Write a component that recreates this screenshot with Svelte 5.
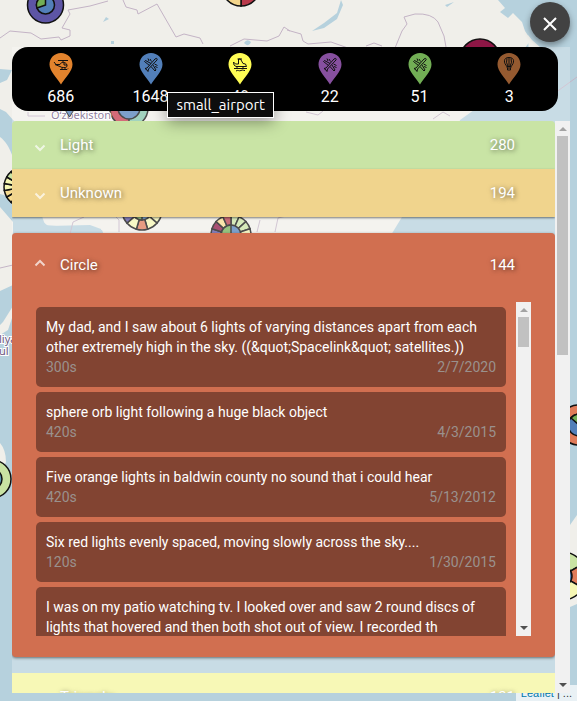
<script>
  let closed = $state(false);

  const airports = [
    { name: 'heliport', count: 686, color: '#e2832d', icon: 'heli' },
    { name: 'large_airport', count: 1648, color: '#527fb9', icon: 'plane' },
    { name: 'small_airport', count: 49, color: '#fffd54', icon: 'sea' },
    { name: 'medium_airport', count: 22, color: '#87509f', icon: 'plane' },
    { name: 'closed', count: 51, color: '#72ae55', icon: 'plane' },
    { name: 'balloonport', count: 3, color: '#955a30', icon: 'balloon' }
  ];

  const reports = [
    { text: 'My dad, and I saw about 6 lights of varying distances apart from each other extremely high in the sky. ((&quot;Spacelink&quot; satellites.))', time: '300s', date: '2/7/2020' },
    { text: 'sphere orb light following a huge black object', time: '420s', date: '4/3/2015' },
    { text: 'Five orange lights in baldwin county no sound that i could hear', time: '420s', date: '5/13/2012' },
    { text: 'Six red lights evenly spaced, moving slowly across the sky....', time: '120s', date: '1/30/2015' },
    { text: 'I was on my patio watching tv. I looked over and saw 2 round discs of lights that hovered and then both shot out of view. I recorded th', time: '180s', date: '8/12/2014' }
  ];

  function wedge(i, n, r) {
    const a = (i / n) * Math.PI * 2 - Math.PI / 2;
    const b = ((i + 1) / n) * Math.PI * 2 - Math.PI / 2;
    return `M0 0L${Math.cos(a) * r} ${Math.sin(a) * r}A${r} ${r} 0 0 1 ${Math.cos(b) * r} ${Math.sin(b) * r}Z`;
  }

  const wheels = [
    { x: 241, y: -13, r: 19, colors: ['#b93a4b', '#b93a4b', '#f2d48b', '#f2d48b'], core: '#5180b9' },
    { x: 142, y: 210, r: 20, colors: ['#f6f7b3', '#83c5aa', '#c9e3a3', '#f6f7b3', '#f6f7b3', '#df7b59', '#f6f7b3', '#5d55a5', '#f7dc91', '#cf4e54', '#c9e3a3'], core: '#5180b9' },
    { x: 231, y: 235, r: 20, colors: ['#c9e3a3', '#c9e3a3', '#c9e3a3', '#f6f7b3', '#f6f7b3', '#f7dc91', '#df7b59', '#df7b59', '#f6f7b3', '#f6f7b3', '#f6f7b3', '#5d55a5', '#8d1645', '#f7dc91', '#b93a4b'], core: '#5180b9' },
    { x: 24, y: 187, r: 20, colors: ['#c9e3a3', '#f6f7b3', '#f6f7b3', '#f7dc91', '#e5946b', '#e5946b', '#cf4e54', '#cf4e54', '#8d1645', '#8d1645', '#c53a4b', '#f7dc91', '#f7dc91', '#f6f7b3', '#f6f7b3', '#c9e3a3', '#5d55a5', '#5d55a5'], core: '#72ae55' },
    { x: 562, y: 576, r: 24, colors: ['#c9e3a3', '#df7b59', '#f6f7b3', '#f6f7b3', '#cf4e54', '#f7dc91'], core: '#5180b9' }
  ];
</script>

{#snippet glyph(icon)}
  {#if icon === 'heli'}
    <path d="M9 7.500H19M14 7.500V9.500M5 9L7 11.500L11 11.500C11.500 10 12.500 9.500 14.500 9.500C17 9.500 18.500 11.500 18 13.500C17 15 13 15 11 13.500L6 11.500M15 9.500V12H18M11 16.500H18L19 15.500M13 14.500V16.500M16 14.500V16.500" />
  {:else if icon === 'plane'}
    <path d="M17 5.500C18 5.200 18.500 6 18 7L9.500 16L9 18.500L8 17L6 15.500L8 15L16 6ZM12 10.500L6.500 7.500L5.500 8.500L10.500 12.500M14 12L17 17L16 18L12 13.500M9 5.500L10 8M11 6L12.500 8.500M18.500 14.500L16 13.500M18.500 12.500L15.500 11" />
  {:else if icon === 'sea'}
    <path d="M5.500 9L7.500 11H10.500V6H12.500L15 10.500L17.500 11L18.500 13.500H8L6 12ZM9.500 6H14M6 15.500H19M8 18C10 16.500 11 18.500 13 17.500S15 17.500 17 17.500M9 13V15M15 13V15" />
  {:else}
    <path d="M12 4.500C6 4.500 6.500 10 10 13.500H14C17.500 10 18 4.500 12 4.500ZM10 5.500Q8.500 9 11 13.500M14 5.500Q15.500 9 13 13.500M12 4.500V13M9.500 13.500L10.500 15H13.500L14.500 13.500M10.500 15V17H13.500V15" />
  {/if}
{/snippet}

{#snippet bar(cls)}
  <div class="scrollbar {cls}" aria-hidden="true">
    <span class="up"></span>
    <span class="thumb"></span>
    <span class="down"></span>
  </div>
{/snippet}

<div class="page">
  <svg class="map" aria-hidden="true">
    <rect width="100%" height="100%" fill="#b6d1dd" />
    <path d="M0 0H498L505 8L500 12L508 18L513 13L522 22L525 31L531 40L521 53L518 80L488 100L460 120L450 155L432 184L402 217L391 235H104L102 230L45 225L40 210L25 155L22 130L6 112L0 109V83L7 80L12 70L0 69Z" fill="#f0efea" />
    <path d="M0 137C15 148 20 180 14 198L0 194ZM0 207L13 222V285L0 291ZM13 306L3 322L0 325V335L8 330L13 315ZM0 443Q6 450 6 462Q3 469 0 470ZM570 525L577 515V604L570 607ZM528 35L532 40L540 47V68L529 60Z" fill="#f0efea" />
    <path d="M341 0L337 13L324 23L312 31L324 28L337 19L343 5ZM304 2L308 13M290 32L292 39M445 5L454 2L447 7ZM103 22L106 17L109 19ZM111 41H114V44H111ZM244 43Q247 38 251 42Q249 48 244 43ZM40 219L48 226L90 225L101 229V238H42Z" fill="#b6d1dd" />
    <g fill="none" stroke="#c4b4c6" stroke-width="1">
      <path d="M0 38L10 31L31 33L41 39L59 37L61 40L70 36V30L62 28L70 14L68 10L90 6L108 1M123 0L126 7L137 10L138 14L157 4L176 37L184 34L200 38L203 44M230 46L244 39L267 41L279 36L284 27L290 31M287 30L301 34L303 41L308 44L331 42L348 48M366 46L374 43L382 46M395 48L402 31L407 24L404 17L415 14Q432 13 438 22L444 36L446 47M577 77L548 98" />
      <path d="M306 112L318 115L323 111M433 119L443 112L450 116M28 112V116H45M70 234L73 222L84 217M119 232V220L116 217M257 232L260 220M275 232L278 218L290 215M0 268L13 265" />
    </g>
    <g stroke="#111" stroke-width="1.500">
      <circle cx="45.500" cy="5" r="18" fill="#5d55a5" />
      <circle cx="45.500" cy="5" r="9" fill="#527fb9" />
      <path d="M45.500 5L37 8A9 9 0 0 1 45.500 -4Z" fill="#72ae55" />
      <circle cx="480" cy="59" r="20" fill="#8d1645" />
      <circle cx="129" cy="108" r="19" fill="#83c5aa" />
      <path d="M129 108V127A19 19 0 0 1 110 108Z" fill="#c53a4b" />
      <circle cx="129" cy="108" r="11" fill="#527fb9" />
      <circle cx="-8" cy="479" r="19" fill="#c9e3a3" />
      <circle cx="-8" cy="479" r="10" fill="#5d9ab5" />
      <circle cx="579" cy="425" r="20" fill="#df7b59" />
      <circle cx="579" cy="425" r="11" fill="#527fb9" />
      <path d="M579 425L571 418A11 11 0 0 1 579 414Z" fill="#72ae55" />
      {#each wheels as w}
        <g transform="translate({w.x} {w.y})">
          {#each w.colors as c, i}
            <path d={wedge(i, w.colors.length, w.r)} fill={c} />
          {/each}
          <circle r="10" fill={w.core} />
          <path d="M0 0V10A10 10 0 0 1 0 -10Z" fill="#72ae55" />
        </g>
      {/each}
    </g>
    <g class="places">
      <text x="51" y="119">Oʻzbekiston</text>
      <text x="-1" y="343">liya</text>
      <text x="-1" y="355">ul</text>
    </g>
    <path d="M64 108H75L69.500 117Z" fill="#527fb9" stroke="#111" />
  </svg>

  <div class="attribution"><a href="#leaflet">Leaflet</a> | ...</div>

  {#if !closed}
    <main class="drawer">
      <header class="legend">
        {#each airports as a}
          <div class="airport">
            <svg width="24" height="32" viewBox="0 0 24 32" role="img" aria-label={a.name}>
              <path d="M12 0C5.500 0 .5 5 .5 11.500C.5 18 8 25 12 31.500C16 25 23.500 18 23.500 11.500C23.500 5 18.500 0 12 0Z" fill={a.color} />
              <g class="line">{@render glyph(a.icon)}</g>
            </svg>
            <span>{a.count}</span>
            {#if a.name === 'small_airport'}
              <div class="tooltip" role="tooltip">{a.name}</div>
            {/if}
          </div>
        {/each}
      </header>

      <div class="scroller">
        <div class="panels">
          <button class="head light">
            <svg class="chevron" viewBox="0 0 12 8"><path d="M1.500 1.500L6 6L10.500 1.500" /></svg>
            <span class="name">Light</span><span>280</span>
          </button>
          <button class="head unknown">
            <svg class="chevron" viewBox="0 0 12 8"><path d="M1.500 1.500L6 6L10.500 1.500" /></svg>
            <span class="name">Unknown</span><span>194</span>
          </button>
          <section class="open">
            <button class="head tall">
              <svg class="chevron flip" viewBox="0 0 12 8"><path d="M1.500 1.500L6 6L10.500 1.500" /></svg>
              <span class="name">Circle</span><span>144</span>
            </button>
            <div class="body">
              <div class="reports">
                {#each reports as r}
                  <article>
                    <p>{r.text}</p>
                    <div class="meta"><span>{r.time}</span><span>{r.date}</span></div>
                  </article>
                {/each}
              </div>
              {@render bar('inner')}
            </div>
          </section>
          <button class="head triangle">
            <svg class="chevron" viewBox="0 0 12 8"><path d="M1.500 1.500L6 6L10.500 1.500" /></svg>
            <span class="name">Triangle</span><span>131</span>
          </button>
        </div>
        {@render bar('outer')}
      </div>
    </main>
  {/if}

  <button class="close" aria-label="Close" onclick={() => (closed = !closed)}>
    <svg width="16" height="16" viewBox="0 0 16 16"><path d="M2 2L14 14M14 2L2 14" /></svg>
  </button>
</div>

<style>
  :global(body) {
    margin: 0;
    background: #fff;
  }
  .page {
    position: relative;
    box-sizing: border-box;
    height: calc(100vh - 1px);
    padding: 47px 7px 8px 12px;
    overflow: hidden;
    font-family: Roboto, "Liberation Sans", sans-serif;
  }
  .map {
    position: absolute;
    inset: 0;
    width: 100%;
    height: 100%;
  }
  .places {
    font: 11px "Noto Sans", sans-serif;
    fill: #6c5680;
    stroke: #fff;
    stroke-width: 2px;
    paint-order: stroke;
  }
  .attribution {
    position: absolute;
    right: 0;
    bottom: 0;
    padding: 0 5px;
    background: rgba(255, 255, 255, 0.7);
    color: #333;
    font: 11px/16px "Liberation Sans", Arial, sans-serif;
  }
  .attribution a {
    color: #0078a8;
    text-decoration: none;
  }
  .drawer {
    position: relative;
    display: flex;
    flex-direction: column;
    gap: 10px;
    height: 100%;
    background: rgba(255, 255, 255, 0.25);
  }
  .legend {
    flex: none;
    display: flex;
    box-sizing: border-box;
    height: 64px;
    margin-right: 12px;
    padding: 6px 4px 0;
    border-radius: 16px;
    background: #000;
    color: #fff;
    font-size: 16px;
    line-height: 20px;
  }
  .airport {
    position: relative;
    flex: 1;
    display: flex;
    flex-direction: column;
    align-items: center;
    gap: 2px;
  }
  .airport > svg {
    display: block;
  }
  .line {
    fill: none;
    stroke: #111;
    stroke-width: 1;
  }
  .tooltip {
    position: absolute;
    z-index: 2;
    top: 39px;
    right: 11px;
    padding: 2px 8px;
    border: 1px solid #fff;
    background: #0d0d0d;
    box-shadow: 0 4px 16px rgba(0, 0, 0, 0.4);
    font: 15px/20px Ubuntu, "Noto Sans", sans-serif;
  }
  .scroller {
    flex: 1;
    min-height: 0;
    display: flex;
    overflow: hidden;
  }
  .panels {
    flex: 1;
    min-width: 0;
    overflow: hidden;
  }
  .head {
    display: flex;
    align-items: center;
    box-sizing: border-box;
    width: 100%;
    height: 48px;
    padding: 0 40px 0 22px;
    border: 0;
    color: #fff;
    font: 15px/24px Roboto, sans-serif;
    text-align: left;
    text-shadow: 1px 1px 5px rgba(0, 0, 0, 0.6);
    cursor: pointer;
  }
  .light {
    border-radius: 4px 4px 0 0;
    background: #c9e4a5;
  }
  .unknown {
    background: #f0d48d;
    box-shadow: 0 1px 2px rgba(0, 0, 0, 0.5);
  }
  .tall {
    height: 64px;
    background: none;
  }
  .triangle {
    background: #f7f8b6;
  }
  .name {
    flex: 1;
  }
  .chevron {
    width: 12px;
    height: 8px;
    margin: 5px 14px 0 0;
    fill: none;
    stroke: #fff;
    stroke-width: 2;
    opacity: 0.7;
  }
  .flip {
    margin: 0 14px 5px 0;
    transform: rotate(180deg);
  }
  .open {
    margin: 16px 0;
    padding-bottom: 21px;
    border-radius: 4px;
    background: #d16f50;
    box-shadow: 0 1px 3px rgba(0, 0, 0, 0.5);
  }
  .body {
    display: flex;
    height: 334px;
    margin: 5px 24px 0;
  }
  .reports {
    flex: 1;
    min-width: 0;
    overflow: hidden;
  }
  article {
    margin: 5px 10px 5px 0;
    padding: 10px;
    border-radius: 5px;
    background: #824432;
    color: #fff;
    font-size: 14px;
    line-height: 20px;
  }
  p {
    margin: 0;
  }
  .meta {
    display: flex;
    justify-content: space-between;
    color: #9a918d;
  }
  .scrollbar {
    flex: none;
    display: flex;
    flex-direction: column;
    align-items: center;
    box-sizing: border-box;
    width: 15px;
    padding: 6px 0;
    background: #f1f1f1;
  }
  .up,
  .down {
    border: 4px solid transparent;
    border-top: 0;
    border-bottom: 4px solid #a3a3a3;
  }
  .down {
    margin-top: auto;
    border-top: 4px solid #505050;
    border-bottom: 0;
  }
  .thumb {
    width: 11px;
    height: 30px;
    margin-top: 5px;
    background: #c1c1c1;
  }
  .outer .thumb {
    height: 219px;
  }
  .close {
    position: absolute;
    top: 2px;
    right: 7px;
    display: flex;
    align-items: center;
    justify-content: center;
    width: 40px;
    height: 40px;
    padding: 4px 0 0;
    border: 0;
    border-radius: 50%;
    background: #424242;
    box-shadow: 0 3px 6px rgba(0, 0, 0, 0.4);
    cursor: pointer;
  }
  .close path {
    fill: none;
    stroke: #fff;
    stroke-width: 2;
  }
</style>
